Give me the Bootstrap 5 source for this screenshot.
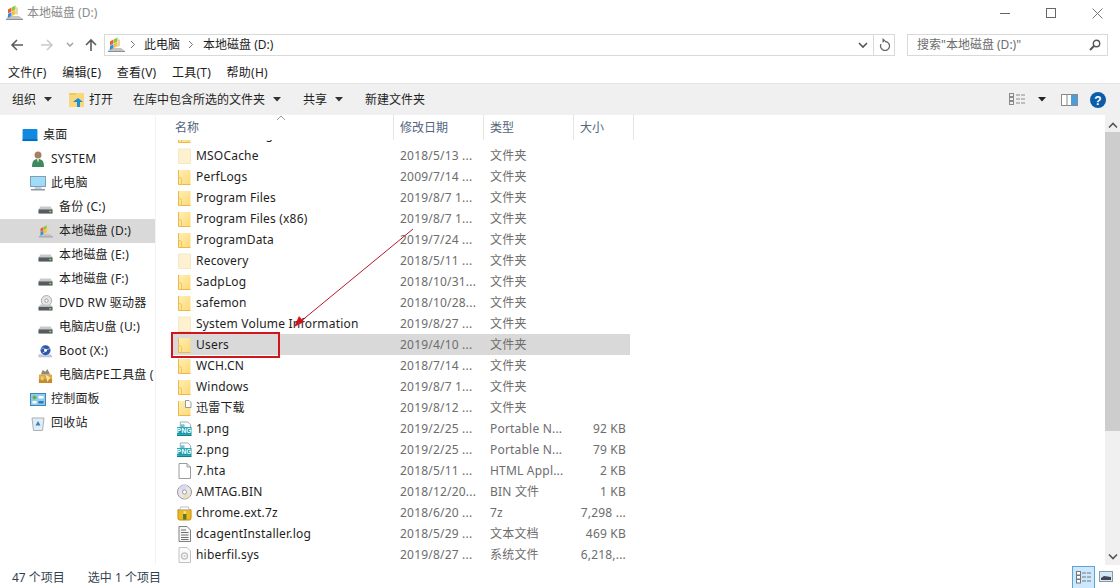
<!DOCTYPE html>
<html lang="zh">
<head>
  <meta charset="UTF-8" />
  <title>本地磁盘 (D:)</title>
  <meta name="viewport" content="width=device-width, initial-scale=1">
  <link href="https://cdn.jsdelivr.net/npm/bootstrap@5.3.3/dist/css/bootstrap.min.css" rel="stylesheet">
  <style>
    html, body { height: 100%; }
    body {
      width: 1120px; height: 588px; overflow: hidden; background: #fff; color: #1e1e1e;
      font: 12px/16px "Noto Sans", "Noto Sans CJK SC", sans-serif;
    }
    .title-bar { height: 32px; padding: 0 0 6px 5px; color: #8a8a8a; }
    .title-bar .win-btn { width: 46px; }
    .nav-bar { height: 23px; margin-top: 1px; }
    .nav-arrows { width: 104px; }
    .nav-fwd { margin-left: 12px; }
    .nav-chev, .nav-up { margin-left: 8px; }
    .addr-box { width: 791px; height: 22px; border: 1px solid #d9d9d9; margin-right: 12px; }
    .addr-icon { margin-left: 2px; }
    .addr-sep { margin: 0 9px 0 8px; }
    .addr-sep.first-sep { margin: 0 8px 0 5px; }
    .addr-refresh { width: 21px; border-left: 1px solid #d9d9d9; height: 100%; }
    .search-box { width: 201px; height: 22px; border: 1px solid #d9d9d9; padding: 0 6px 0 9px; color: #6d6d6d; }
    .menu-bar { height: 27px; padding: 7px 0 0 8px; gap: 15.5px; letter-spacing: .25px; }
    .tool-bar { height: 32px; background: #f0f0f0; border-top: 1px solid #e3e3e3; padding: 0 14px 0 12px; }
    .main-area { height: 450px; }
    .side-pane { width: 156px; padding-top: 8px; border-right: 1px solid #f3f3f3; overflow: hidden; white-space: nowrap; letter-spacing: .2px; }
    .side-row { height: 24px; }
    .side-row.on { background: #d9d9d9; }
    .ind1 { padding-left: 22px; gap: 5px; }
    .ind2 { padding-left: 30px; gap: 5px; }
    .ind3 { padding-left: 38px; gap: 6px; }
    .list-pane { width: 949px; padding-left: 15px; }
    .head-row { height: 25px; color: #53657d; position: relative; }
    .head-cell { border-right: 1px solid #e5e5e5; padding-top: 5px; }
    .sort-caret { position: absolute; left: 105px; top: 0; }
    .list-view { height: 425px; overflow: hidden; }
    .file-row { height: 21px; width: 459px; color: #6d6d6d; white-space: nowrap; letter-spacing: .2px; }
    .file-row.on { background: #d9d9d9; }
    .first-row { margin-top: -16px; }
    .c-name { width: 223px; padding-left: 6px; gap: 4px; color: #1e1e1e; }
    .c-date { width: 90px; padding-left: 6px; }
    .c-type { width: 90px; padding-left: 6px; }
    .c-size { width: 56px; padding-right: 4px; text-align: right; }
    .head-size { width: 60px; padding-left: 6px; }
    .head-name { width: 223px; padding-left: 4px; }
    .scroll-col { width: 15px; background: #f0f0f0; }
    .scroll-up { margin-top: 7px; }
    .scroll-thumb { height: 299px; background: #cdcdcd; margin-top: 3px; }
    .scroll-gap { height: 122px; }
    .status-bar { height: 23px; padding-left: 12px; color: #333f4f; }
    .status-text { padding-top: 2px; }
    .status-sel { margin-left: 23px; }
    .view-active { width: 23px; height: 22px; background: #cce8ff; border: 1px solid #5aa5d6; border-bottom: 0; margin-top: 1px; }
    .view-thumb { margin: 0 7px 0 4px; }
    .gap-12 { margin-left: 12px; }
    .gap-15 { margin-left: 15px; }
    .gap-20 { margin-left: 20px; }
    .gap-22 { margin-left: 22px; }
    .overlay-mark { position: absolute; left: 0; top: 0; pointer-events: none; }
    .red-box { position: absolute; left: 171px; top: 217px; width: 109px; height: 26px; border: 2px solid #d2141c; }
  </style>
</head>

<body>
  <svg width="0" height="0" class="d-block position-absolute">
    <defs>
      <linearGradient id="fg" x1="0" y1="0" x2="1" y2="1"><stop offset="0" stop-color="#ffeeb5"/><stop offset="1" stop-color="#fcd975"/></linearGradient>
      <symbol id="folder" viewBox="0 0 15 16"><path d="M1.500 1h12v14.500h-12z" fill="url(#fg)"/><path d="M1.500 1v14.500h12" fill="none" stroke="#ecb949"/><path d="M1.500 8l3 1.500v6" fill="none" stroke="#f0c75e"/></symbol>
      <symbol id="folder-pale" viewBox="0 0 15 16"><path d="M1.500 1h12v14.500h-12z" fill="#fdf1d0" stroke="#f5e8c8"/></symbol>
      <symbol id="folder-doc" viewBox="0 0 15 16"><path d="M1.500 1h12v14.500h-12z" fill="url(#fg)"/><path d="M1.500 1v14.500h12" fill="none" stroke="#ecb949"/><path d="M8.500.5h3.500l2 2v5h-5.500z" fill="#fff" stroke="#9a9a9a"/></symbol>
      <symbol id="png-file" viewBox="0 0 16 16"><path d="M3.500.5h8l3 3v11h-11z" fill="#fff" stroke="#9aa5ad"/><path d="M4 3h4v3H4z" fill="#6cc3d5"/><rect y="6" width="15.500" height="8" fill="#149fb0"/><rect x="0" y="14" width="15.500" height="1.500" fill="#0e7f8e"/><text x="7.700" y="12.600" text-anchor="middle" font-size="7" font-weight="700" fill="#fff" font-family="Liberation Sans">PNG</text></symbol>
      <symbol id="blank-file" viewBox="0 0 14 16"><path d="M1.500.5h8l3.500 3.500v11.500H1.500z" fill="#fff" stroke="#9c9c9c"/><path d="M9.500.5v3.500H13" fill="none" stroke="#9c9c9c"/></symbol>
      <symbol id="bin-file" viewBox="0 0 16 16"><circle cx="8" cy="8" r="7.500" fill="#e8e4ea" stroke="#8f8f98"/><path d="M8 8L2 4a7 7 0 0 1 9-3z" fill="#d8d8ef"/><path d="M8 8l6 4a7 7 0 0 1-7 3z" fill="#f1ddb8"/><circle cx="8" cy="8" r="2.200" fill="#fff" stroke="#9a9a9a"/></symbol>
      <symbol id="zip-file" viewBox="0 0 16 16"><path d="M1 4.500h14v9a2 2 0 0 1-2 2H3a2 2 0 0 1-2-2z" fill="#edb820" stroke="#c48d10"/><path d="M3 4.500l1-3h8l1 3z" fill="#fff" stroke="#bbb"/><rect x="6.500" y="9" width="3.500" height="6" fill="#4c7d2c"/><rect x="7" y="6" width="2.500" height="3" fill="#f7e08a"/></symbol>
      <symbol id="log-file" viewBox="0 0 14 16"><path d="M1.500.5h8l3.500 3.500v11.500H1.500z" fill="#f7f7f7" stroke="#7e7e7e"/><path d="M3.500 4h5M3.500 6.500h7.500M3.500 9h7.500M3.500 11.500h7.500M3.500 13.500h7.500" stroke="#6e6e6e"/></symbol>
      <symbol id="sys-file" viewBox="0 0 14 16"><path d="M1.500.5h8l3.500 3.500v11.500H1.500z" fill="#fbfbfb" stroke="#c2c2c2"/><circle cx="7" cy="9" r="3" fill="none" stroke="#c4c4c4" stroke-width="1.500"/><circle cx="7" cy="9" r="1" fill="#c4c4c4"/></symbol>
      <symbol id="drive" viewBox="0 0 16 16"><path d="M2.500 7h11l2 3H.5z" fill="#c9c9c9"/><rect x=".5" y="10" width="15" height="4.500" fill="#555c60"/><rect x="12" y="11.500" width="2" height="1.500" fill="#7ddc6b"/></symbol>
      <symbol id="win-drive" viewBox="0 0 18 16"><path d="M3 11h11l4 3H1z" fill="#c4c4c4"/><rect x="1" y="14" width="17" height="1" fill="#8f8f8f"/><path d="M3 4.500l3.500-2v4l-3.500 2z" fill="#ef5b2a"/><path d="M7 2.200l3.500-1.700v4l-3.500 2z" fill="#8dc63f"/><path d="M3 9l3.500-2v4L3 13z" fill="#2f8fe0"/><path d="M7 6.700l3.500-1.700v4L7 11z" fill="#fbc02d"/><path d="M10.500 1.500l2.500 1.500v6l-2.500 1z" fill="#e6d6a8"/></symbol>
      <symbol id="dvd-drive" viewBox="0 0 16 18"><circle cx="9" cy="6" r="5.500" fill="#e6e6e6" stroke="#a9a9a9"/><circle cx="9" cy="6" r="1.800" fill="#fff" stroke="#999"/><path d="M2.500 10h11l2 2.500H.5z" fill="#c9c9c9"/><rect x=".5" y="12.500" width="15" height="4" fill="#555c60"/><rect x="12" y="13.800" width="2" height="1.500" fill="#7ddc6b"/></symbol>
      <symbol id="boot-drive" viewBox="0 0 18 16"><path d="M1 12h14l2 2.500H1z" fill="#cfd4e6" stroke="#8a93b5" stroke-width=".5"/><circle cx="9" cy="6.500" r="6" fill="#2b59a8"/><path d="M4 5c2-2 3-1 4 0s3 1 6-.5M5 10.500c1-2 4-1.500 5-3.500" stroke="#cfe0f8" fill="none"/><circle cx="9" cy="6.500" r="1.800" fill="#fff"/></symbol>
      <symbol id="tool-drive" viewBox="0 0 16 18"><path d="M1 8h14v9H1z" fill="#e0a93f"/><path d="M1 13h14v4H1z" fill="#c58a2a"/><path d="M3 8l2-5 3 2 2-3 3 6z" fill="#8f8a70"/><path d="M8 8l5 3-3 5z" fill="#f4e3b8"/><rect x="3" y="10" width="3" height="4" fill="#f0ca74"/></symbol>
      <symbol id="desktop" viewBox="0 0 16 14"><rect width="16" height="13" rx="1" fill="#0f8ae0"/><rect y="11" width="16" height="2" fill="#0a69b8"/></symbol>
      <symbol id="user-pic" viewBox="0 0 16 16"><circle cx="8" cy="4" r="3.500" fill="#a97f5f"/><path d="M2 16c0-6 2-8 6-8s6 2 6 8z" fill="#3f8a5d"/><path d="M7 8h2l-1 4z" fill="#eee"/></symbol>
      <symbol id="computer" viewBox="0 0 16 15"><rect x=".5" y=".5" width="15" height="10" fill="#9fdcf8" stroke="#7f9fb5"/><path d="M5 11h6l1 2H4z" fill="#c9ced3"/><rect x="1" y="13" width="14" height="1.500" fill="#8f99a3"/></symbol>
      <symbol id="control-panel" viewBox="0 0 16 13"><rect x=".5" y=".5" width="15" height="12" fill="#8fcbee" stroke="#3f86b8"/><circle cx="4.500" cy="4.500" r="2" fill="#67b04d"/><rect x="8.500" y="3" width="5" height="2.500" fill="#fff"/><rect x="2.500" y="8" width="4" height="2.500" fill="#fff"/><rect x="8.500" y="8" width="5" height="2.500" fill="#3b78b4"/></symbol>
      <symbol id="recycle" viewBox="0 0 16 16"><path d="M2 3h12l-1.500 12.500h-9z" fill="#e3ecf3" stroke="#a4b0ba"/><path d="M8 6l2.500 4.500h-5z" fill="#2d84c8"/></symbol>
    </defs>
  </svg>

  <div class="title-bar d-flex align-items-center">
    <svg width="18" height="16" class="me-1"><use href="#win-drive"/></svg>
    <span>本地磁盘 (D:)</span>
    <div class="ms-auto d-flex">
      <div class="win-btn d-flex justify-content-center"><svg width="10" height="10"><path d="M0 5.500h10" stroke="#666"/></svg></div>
      <div class="win-btn d-flex justify-content-center"><svg width="10" height="10"><rect x=".5" y=".5" width="9" height="9" fill="none" stroke="#666"/></svg></div>
      <div class="win-btn d-flex justify-content-center"><svg width="11" height="11"><path d="M.5.500l10 10M10.500.500l-10 10" stroke="#777"/></svg></div>
    </div>
  </div>

  <div class="nav-bar d-flex align-items-center">
    <div class="nav-arrows d-flex align-items-center flex-shrink-0">
      <svg class="ms-2" width="18" height="14"><path d="M15 7H4M9 2L4 7l5 5" fill="none" stroke="#5c5c5c" stroke-width="1.600"/></svg>
      <svg class="nav-fwd" width="18" height="14"><path d="M3 7h11M9 2l5 5-5 5" fill="none" stroke="#c9c9c9" stroke-width="1.600"/></svg>
      <svg class="nav-chev" width="12" height="8"><path d="M3 2l3 3 3-3" fill="none" stroke="#9c9c9c" stroke-width="1.400"/></svg>
      <svg class="nav-up" width="14" height="14"><path d="M7 13V2M2 7l5-5 5 5" fill="none" stroke="#5c5c5c" stroke-width="1.600"/></svg>
    </div>
    <div class="addr-box d-flex align-items-center">
      <svg class="addr-icon" width="18" height="16"><use href="#win-drive"/></svg>
      <svg class="addr-sep first-sep" width="6" height="9"><path d="M1 1l3.500 3.500L1 8" fill="none" stroke="#777"/></svg>
      <span>此电脑</span>
      <svg class="addr-sep" width="6" height="9"><path d="M1 1l3.500 3.500L1 8" fill="none" stroke="#777"/></svg>
      <span>本地磁盘 (D:)</span>
      <svg class="ms-auto me-1" width="12" height="8"><path d="M2 2l4 4 4-4" fill="none" stroke="#555" stroke-width="1.600"/></svg>
      <div class="addr-refresh d-flex align-items-center justify-content-center">
        <svg width="12" height="13"><path d="M6.500 2.500a4.500 4.500 0 1 1-4 2.500" transform="translate(.5 1)" fill="none" stroke="#666" stroke-width="1.300"/><path d="M4.500 0v5l3-2.500z" fill="#666"/></svg>
      </div>
    </div>
    <div class="search-box d-flex align-items-center">
      <span>搜索"本地磁盘 (D:)"</span>
      <svg class="ms-auto" width="12" height="12"><circle cx="7.500" cy="4.500" r="3.200" fill="none" stroke="#555" stroke-width="1.400"/><path d="M5 7l-4 4" stroke="#555" stroke-width="2"/></svg>
    </div>
  </div>

  <div class="menu-bar d-flex align-items-center">
    <span>文件(F)</span><span>编辑(E)</span><span>查看(V)</span><span>工具(T)</span><span>帮助(H)</span>
  </div>

  <div class="tool-bar d-flex align-items-center">
    <span>组织</span>
    <svg class="ms-2" width="8" height="5"><path d="M0 0h8L4 4.500z" fill="#333"/></svg>
    <svg class="ms-3" width="17" height="16"><path d="M1 3h6l1-2h8v14H1z" fill="#fbd77b"/><path d="M1 1h7v2H1z" fill="#f5c85a"/><path d="M9 15v-5H5l5-4 5 4h-3v5z" fill="#1c8fd6"/></svg>
    <span class="ms-1">打开</span>
    <span class="gap-20">在库中包含所选的文件夹</span>
    <svg class="ms-2" width="8" height="5"><path d="M0 0h8L4 4.500z" fill="#333"/></svg>
    <span class="gap-22">共享</span>
    <svg class="ms-2" width="8" height="5"><path d="M0 0h8L4 4.500z" fill="#333"/></svg>
    <span class="gap-22">新建文件夹</span>
    <svg class="ms-auto" width="17" height="13"><rect x=".5" y=".5" width="4" height="3" fill="none" stroke="#8a8a8a"/><rect x=".5" y="4.500" width="4" height="3" fill="none" stroke="#8a8a8a"/><rect x=".5" y="8.500" width="4" height="3" fill="none" stroke="#8a8a8a"/><path d="M7 2h4M12 2h4M7 6h4M12 6h4M7 10h4M12 10h4" stroke="#8a8a8a"/></svg>
    <svg class="gap-12" width="8" height="5"><path d="M0 0h8L4 4.500z" fill="#222"/></svg>
    <svg class="gap-15" width="17" height="12"><rect x=".5" y=".5" width="16" height="11" fill="#fff" stroke="#8a8a8a"/><rect x="10" y="1" width="6" height="10" fill="#4a9edb"/><path d="M6 1v10" stroke="#8a8a8a"/></svg>
    <svg class="gap-12" width="16" height="16"><circle cx="8" cy="8" r="8" fill="#0b5cab"/><text x="8" y="12.500" text-anchor="middle" font-size="12" font-weight="700" fill="#fff" font-family="Liberation Sans">?</text></svg>
  </div>

  <div class="main-area d-flex position-relative">
    <div class="side-pane flex-shrink-0" id="sidePane"></div>
    <div class="list-pane flex-shrink-0">
      <div class="head-row d-flex">
        <div class="head-cell head-name">名称</div>
        <div class="head-cell c-date">修改日期</div>
        <div class="head-cell c-type">类型</div>
        <div class="head-cell head-size">大小</div>
        <svg class="sort-caret" width="10" height="6"><path d="M1 5l4-4 4 4" fill="none" stroke="#9c9c9c"/></svg>
      </div>
      <div class="list-view" id="fileList"></div>
    </div>
    <div class="scroll-col flex-shrink-0 d-flex flex-column align-items-center">
      <svg class="scroll-up" width="10" height="7"><path d="M1 5.500l4-4 4 4" fill="none" stroke="#555" stroke-width="1.600"/></svg>
      <div class="scroll-thumb w-100"></div>
      <div class="scroll-gap"></div>
      <svg width="10" height="7"><path d="M1 1.500l4 4 4-4" fill="none" stroke="#555" stroke-width="1.600"/></svg>
    </div>

    <div class="red-box"></div>
    <svg class="overlay-mark" width="1120" height="450">
      <path d="M413 114L300 207" stroke="#b8182c" fill="none"/>
      <path d="M294 212l5-11 5 6z" fill="#d2141c"/>
    </svg>
  </div>

  <div class="status-bar d-flex align-items-center">
    <span class="status-text">47 个项目</span>
    <span class="status-text status-sel">选中 1 个项目</span>
    <div class="view-active ms-auto d-flex align-items-center justify-content-center">
      <svg width="16" height="13"><rect x=".5" y=".5" width="4" height="3.500" fill="#fff" stroke="#777"/><rect x=".5" y="4.500" width="4" height="3.500" fill="#fff" stroke="#777"/><rect x=".5" y="8.500" width="4" height="3.500" fill="#fff" stroke="#777"/><path d="M6 2h4M11 2h4M6 6h4M11 6h4M6 10h4M11 10h4" stroke="#777"/></svg>
    </div>
    <svg class="view-thumb" width="14" height="11"><rect x=".5" y=".5" width="13" height="10" fill="#d5e8f5" stroke="#8a9aa5"/><path d="M2 7l3-2 7 1v3H2z" fill="#445"/></svg>
  </div>

  <script>
    const sideItems = [
      ["desktop", "桌面", 1, 16, 13],
      ["user-pic", "SYSTEM", 2, 16, 16],
      ["computer", "此电脑", 2, 16, 15],
      ["drive", "备份 (C:)", 3, 15, 15],
      ["win-drive", "本地磁盘 (D:)", 3, 15, 15, true],
      ["drive", "本地磁盘 (E:)", 3, 15, 15],
      ["drive", "本地磁盘 (F:)", 3, 15, 15],
      ["dvd-drive", "DVD RW 驱动器", 3, 15, 17],
      ["drive", "电脑店U盘 (U:)", 3, 15, 15],
      ["boot-drive", "Boot (X:)", 3, 15, 15],
      ["tool-drive", "电脑店PE工具盘 (", 3, 15, 17],
      ["control-panel", "控制面板", 2, 16, 13],
      ["recycle", "回收站", 2, 16, 16]
    ];
    const sidePane = document.getElementById("sidePane");
    sideItems.forEach(s => {
      const div = document.createElement("div");
      div.className = `side-row d-flex align-items-center ind${s[2]}${s[5] ? " on" : ""}`;
      div.innerHTML = `<svg width="${s[3]}" height="${s[4]}" class="flex-shrink-0"><use href="#${s[0]}"/></svg><span>${s[1]}</span>`;
      sidePane.appendChild(div);
    });

    const files = [
      ["folder", "Downloading", "2018/5/13 ...", "文件夹", ""],
      ["folder-pale", "MSOCache", "2018/5/13 ...", "文件夹", ""],
      ["folder", "PerfLogs", "2009/7/14 ...", "文件夹", ""],
      ["folder", "Program Files", "2019/8/7 1...", "文件夹", ""],
      ["folder", "Program Files (x86)", "2019/8/7 1...", "文件夹", ""],
      ["folder", "ProgramData", "2019/7/24 ...", "文件夹", ""],
      ["folder-pale", "Recovery", "2018/5/11 ...", "文件夹", ""],
      ["folder", "SadpLog", "2018/10/31...", "文件夹", ""],
      ["folder", "safemon", "2018/10/28...", "文件夹", ""],
      ["folder-pale", "System Volume Information", "2019/8/27 ...", "文件夹", ""],
      ["folder", "Users", "2019/4/10 ...", "文件夹", "", true],
      ["folder", "WCH.CN", "2018/7/14 ...", "文件夹", ""],
      ["folder", "Windows", "2019/8/7 1...", "文件夹", ""],
      ["folder-doc", "迅雷下载", "2019/8/12 ...", "文件夹", ""],
      ["png-file", "1.png", "2019/2/25 ...", "Portable N...", "92 KB"],
      ["png-file", "2.png", "2019/2/25 ...", "Portable N...", "79 KB"],
      ["blank-file", "7.hta", "2018/5/11 ...", "HTML Appl...", "2 KB"],
      ["bin-file", "AMTAG.BIN", "2018/12/20...", "BIN 文件", "1 KB"],
      ["zip-file", "chrome.ext.7z", "2018/6/20 ...", "7z", "7,298 ..."],
      ["log-file", "dcagentInstaller.log", "2018/5/29 ...", "文本文档", "469 KB"],
      ["sys-file", "hiberfil.sys", "2019/8/27 ...", "系统文件", "6,218,..."]
    ];
    const fileList = document.getElementById("fileList");
    files.forEach((f, i) => {
      const div = document.createElement("div");
      div.className = `file-row d-flex align-items-center${f[5] ? " on" : ""}${i === 0 ? " first-row" : ""}`;
      div.innerHTML = `
        <div class="c-name d-flex align-items-center"><svg width="15" height="16" class="flex-shrink-0"><use href="#${f[0]}"/></svg><span>${f[1]}</span></div>
        <div class="c-date">${f[2]}</div>
        <div class="c-type">${f[3]}</div>
        <div class="c-size">${f[4]}</div>`;
      fileList.appendChild(div);
    });
  </script>
</body>
</html>
